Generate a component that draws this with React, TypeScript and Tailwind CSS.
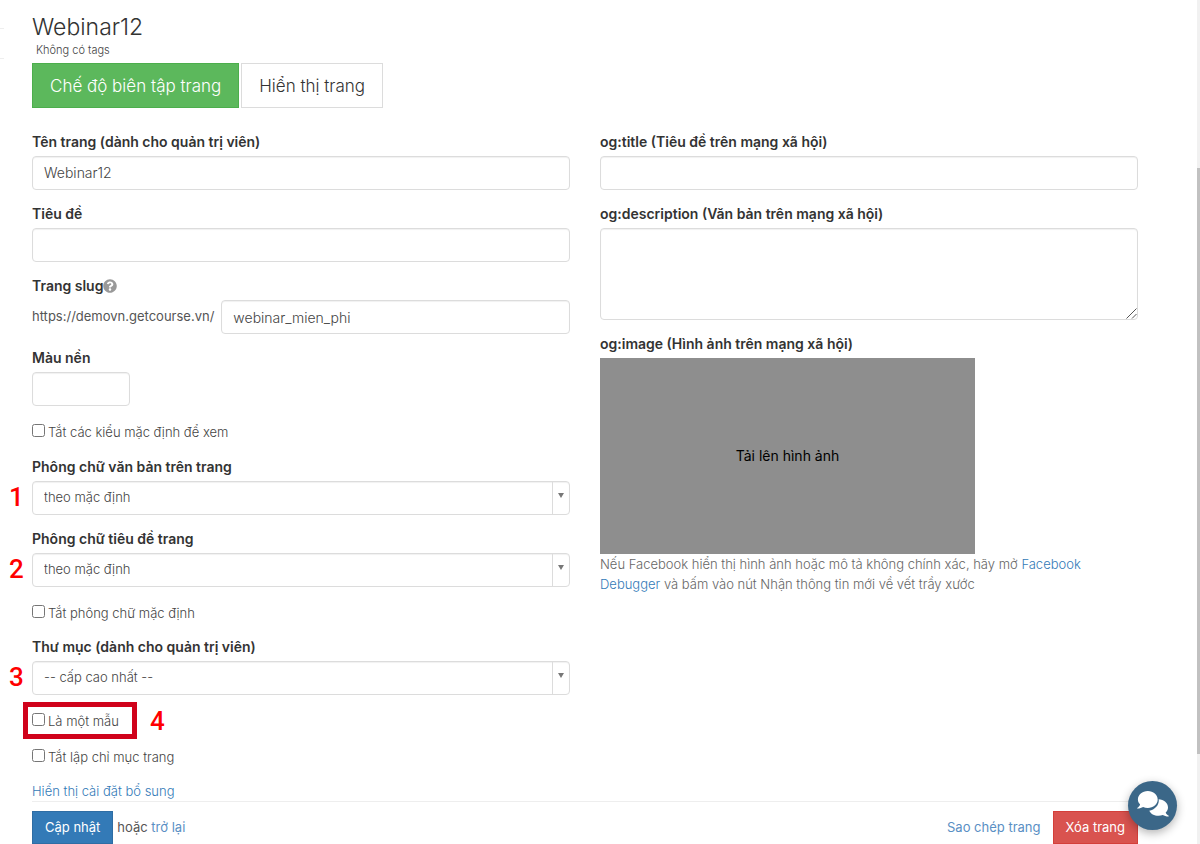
import React from "react";
import { FaQuestionCircle } from "react-icons/fa";

const controlClass =
  "w-full h-[34px] rounded border border-[#dcdcdc] bg-white px-[11px] font-light text-[#444] shadow-[inset_0_1px_1px_rgba(0,0,0,0.06)] outline-none focus:border-[#66afe9]";

interface FieldProps {
  id: string;
  label: string;
  hint?: boolean;
  children: React.ReactNode;
}

const Field: React.FC<FieldProps> = ({ id, label, hint, children }) => (
  <div className="mb-3.5">
    <div className="mb-1 flex items-center">
      <label htmlFor={id} className="text-sm leading-5 font-semibold text-[#333]">
        {label}
      </label>
      {hint && <FaQuestionCircle className="size-3.5 text-[#999]" />}
    </div>
    {children}
  </div>
);

interface MarkerProps {
  className: string;
  children: React.ReactNode;
}

// Red step number that lies over the form
const Marker: React.FC<MarkerProps> = ({ className, children }) => (
  <span
    className={`absolute font-['Roboto',sans-serif] text-[26px] leading-8 font-medium text-[#ff0000] ${className}`}
  >
    {children}
  </span>
);

interface SelectFieldProps {
  id: string;
  label: string;
  option: string;
  step: number;
}

const SelectField: React.FC<SelectFieldProps> = ({
  id,
  label,
  option,
  step,
}) => (
  <Field id={id} label={label}>
    <div className="relative">
      <Marker className="top-0 -left-[23px]">{step}</Marker>
      <select id={id} className={`${controlClass} appearance-none text-[13px]`}>
        <option>{option}</option>
      </select>
      <span className="pointer-events-none absolute inset-y-px right-px flex w-[17px] justify-center border-l border-[#dcdcdc] pt-[11px]">
        <svg viewBox="0 0 6 5" className="h-[5px] w-1.5 fill-[#777]">
          <path d="M0 0h6L3 5z" />
        </svg>
      </span>
    </div>
  </Field>
);

interface CheckRowProps {
  label: string;
  step?: number;
}

const CheckRow: React.FC<CheckRowProps> = ({ label, step }) => (
  <div className="h-9 pt-0.5">
    <div className="relative inline-block">
      <label className="flex items-start gap-[3px] text-[13px] leading-5">
        <input type="checkbox" className="mt-0.5 size-[13px]" />
        {label}
      </label>
      {step && (
        <>
          <span className="pointer-events-none absolute -top-[9px] -right-[18px] -bottom-2 -left-[9px] border-[5px] border-[#d0021b]" />
          <Marker className="-top-1.5 left-[118px]">{step}</Marker>
        </>
      )}
    </div>
  </div>
);

const ChatIcon: React.FC = () => (
  <svg viewBox="0 0 32 26" className="h-[26px] w-8 fill-current">
    <path d="M21.5 8.3C26.9 8.5 31 12.1 31 16.4c0 2-.9 3.8-2.3 5.2.4 1.300 1.300 2.200 3 3.200.3.200.2.700-.3.700-2.300 0-4.100-.6-5.600-1.500-1.300.5-2.800.8-4.300.8-4.300 0-7.900-2-9.200-5 5.400-1.100 9.500-5.300 9.500-10.300 0-.4 0-.8-.3-1.200z" />
    <path d="M10.800 0C16.300 0 20.700 3.800 20.700 8.500S16.300 17 10.800 17c-1.700 0-3.300-.3-4.700-.9-1.500.9-3.300 1.500-5.600 1.500-.5 0-.6-.5-.3-.7 1.600-1 2.500-2.300 2.900-3.500C1.700 12.100.9 10.400.9 8.500.900 3.800 5.300 0 10.800 0z" />
  </svg>
);

const App: React.FC = () => {
  return (
    <div className="relative min-h-screen bg-white pr-[62px] pl-8 font-['Inter','Noto_Sans',sans-serif] text-[13px] font-light text-[#444]">
      <div className="absolute top-7 left-0 h-[31px] w-1 border-y border-[#eee]" />
      <header className="pt-[11px]">
        <h1 className="text-[23px] leading-8 font-light text-[#333]">
          Webinar12
        </h1>
        <p className="pl-1 text-[11px] leading-[15px]">Không có tags</p>
        <div className="mt-[5px] flex gap-0.5">
          <button
            type="button"
            className="h-[45px] border border-[#4cae4c] bg-[#5cb85c] px-[17px] pt-0.5 text-[17px] font-light text-white"
          >
            Chế độ biên tập trang
          </button>
          <button
            type="button"
            className="h-[45px] border border-[#dcdcdc] bg-white px-[17px] pt-0.5 text-[17px] font-light text-[#333]"
          >
            Hiển thị trang
          </button>
        </div>
      </header>

      <form className="pt-6" onSubmit={(e) => e.preventDefault()}>
        <div className="grid grid-cols-2 gap-[30px]">
          <div>
            <section className="mb-px">
              <Field id="name" label="Tên trang (dành cho quản trị viên)">
                <input
                  id="name"
                  type="text"
                  defaultValue="Webinar12"
                  className={`${controlClass} pb-0.5 text-sm`}
                />
              </Field>
              <Field id="title" label="Tiêu đề">
                <input
                  id="title"
                  type="text"
                  className={`${controlClass} text-sm`}
                />
              </Field>
              <Field id="slug" label="Trang slug" hint>
                <div className="flex items-center gap-[7px]">
                  <span className="font-normal text-[#555]">
                    https://demovn.getcourse.vn/
                  </span>
                  <div className="flex-1">
                    <input
                      id="slug"
                      type="text"
                      defaultValue="webinar_mien_phi"
                      className={`${controlClass} text-sm`}
                    />
                  </div>
                </div>
              </Field>
              <Field id="background" label="Màu nền">
                <div className="w-[98px]">
                  <input
                    id="background"
                    type="text"
                    className={`${controlClass} text-sm`}
                  />
                </div>
              </Field>
              <CheckRow label="Tắt các kiểu mặc định để xem" />
            </section>

            <SelectField
              id="text-font"
              label="Phông chữ văn bản trên trang"
              option="theo mặc định"
              step={1}
            />
            <SelectField
              id="title-font"
              label="Phông chữ tiêu đề trang"
              option="theo mặc định"
              step={2}
            />
            <CheckRow label="Tắt phông chữ mặc định" />
            <SelectField
              id="folder"
              label="Thư mục (dành cho quản trị viên)"
              option="-- cấp cao nhất --"
              step={3}
            />
            <CheckRow label="Là một mẫu" step={4} />
            <CheckRow label="Tắt lập chỉ mục trang" />
          </div>

          <div>
            <Field id="og-title" label="og:title (Tiêu đề trên mạng xã hội)">
              <input
                id="og-title"
                type="text"
                className={`${controlClass} text-sm`}
              />
            </Field>
            <Field
              id="og-description"
              label="og:description (Văn bản trên mạng xã hội)"
            >
              <div className="relative">
                <textarea
                  id="og-description"
                  className="block h-[92px] w-full resize-none rounded border border-[#dcdcdc] px-[11px] py-1.5 text-sm shadow-[inset_0_1px_1px_rgba(0,0,0,0.06)] outline-none"
                />
                <svg
                  viewBox="0 0 11 11"
                  className="pointer-events-none absolute right-px bottom-px size-[11px] fill-none stroke-[#555]"
                >
                  <path d="M0.5 10.5l10-10M6 10.5l4.5-4.5" />
                </svg>
              </div>
            </Field>
            <Field id="og-image" label="og:image (Hình ảnh trên mạng xã hội)">
              <button
                id="og-image"
                type="button"
                className="block h-[196px] w-[375px] bg-[#8e8e8e] text-sm font-normal text-black"
              >
                Tải lên hình ảnh
              </button>
              <p className="leading-5 text-[#666]">
                Nếu Facebook hiển thị hình ảnh hoặc mô tả không chính xác, hãy
                mở{" "}
                <a href="#debugger" className="text-[#337ab7]">
                  Facebook
                  <br />
                  Debugger
                </a>{" "}
                và bấm vào nút Nhận thông tin mới về vết trầy xước
              </p>
            </Field>
          </div>
        </div>

        <a href="#more" className="block leading-5 text-[#337ab7]">
          Hiển thị cài đặt bổ sung
        </a>
        <footer className="flex items-center border-t border-[#eee] pt-[9px]">
          <button
            type="submit"
            className="h-[33px] border border-[#2e6da4] bg-[#337ab7] px-3 font-normal text-white"
          >
            Cập nhật
          </button>
          <span className="ml-1 font-normal text-[#555]">
            hoặc{" "}
            <a href="#back" className="text-[#5a8fc4]">
              trở lại
            </a>
          </span>
          <a href="#copy" className="mr-3 ml-auto font-normal text-[#5a8fc4]">
            Sao chép trang
          </a>
          <button
            type="button"
            className="h-[33px] border border-[#d43f3a] bg-[#d9534f] px-3 font-normal text-white"
          >
            Xóa trang
          </button>
        </footer>
      </form>

      <button
        type="button"
        aria-label="Chat"
        className="fixed right-[23px] bottom-3.5 flex size-[49px] items-center justify-center rounded-full bg-[#3b6788] pb-1 text-white shadow-[0_3px_10px_rgba(0,0,0,0.3)]"
      >
        <ChatIcon />
      </button>

      {/* Thin scroll track on the right edge */}
      <div className="fixed inset-y-0 right-0 w-[3px] bg-[#f1f1f1] pt-[168px]">
        <div className="h-[586px] bg-[#c1c1c1]" />
      </div>
    </div>
  );
};

export default App;
